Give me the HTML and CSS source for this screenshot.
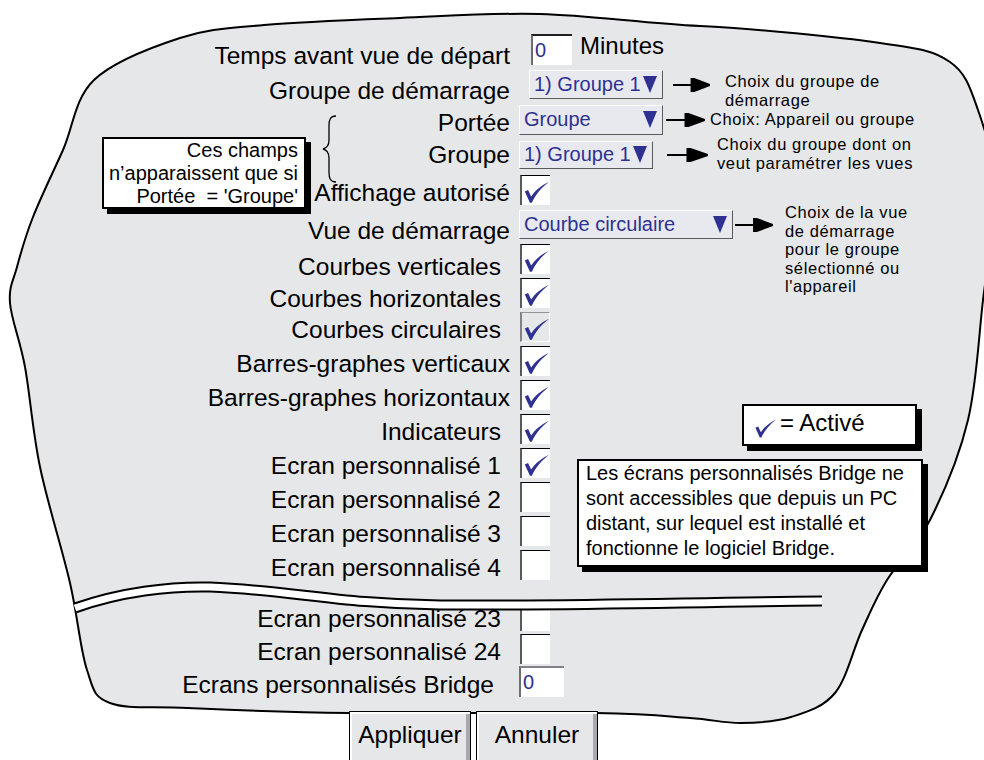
FILE: index.html
```html
<!DOCTYPE html>
<html lang="fr">
<head>
    <meta charset="UTF-8">
    <title>Vues de démarrage</title>
    <link rel="stylesheet" href="styles.css">
</head>
<body>
<div id="page">
    <svg class="blob" width="984" height="760" viewBox="0 0 984 760">
        <path d="M 94 80 C 113.5 61.3, 151.7 47.2, 180 38 C 208.3 28.8, 227.3 28.3, 264 25 C 300.7 21.7, 354 19.8, 400 18 C 446 16.2, 490 12.7, 540 14 C 590 15.3, 643.3 23.2, 700 26 C 756.7 28.8, 838.3 37, 880 43 C 921.7 49, 933.7 50.8, 950 62 C 966.3 73.2, 970.5 88.7, 978 110 C 985.5 131.3, 994.2 158.3, 995 190 C 995.8 221.7, 987.5 261.7, 983 300 C 978.5 338.3, 976.8 383.3, 968 420 C 959.2 456.7, 943.5 493.3, 930 520 C 916.5 546.7, 898.3 561.7, 887 580 C 875.7 598.3, 870.7 611.2, 862 630 C 853.3 648.8, 846.8 678.5, 835 693 C 823.2 707.5, 806.7 712, 791 717 C 775.3 722, 757.8 722.8, 741 723 C 724.2 723.2, 714.2 719.7, 690 718 C 665.8 716.3, 653 713.8, 596 713 C 539 712.2, 416 713.8, 348 713 C 280 712.2, 227.7 709.7, 188 708 C 148.3 706.3, 126.8 709.3, 110 703 C 93.2 696.7, 93.7 690, 87 670 C 80.3 650, 77.8 616.8, 70 583 C 62.2 549.2, 47.5 503, 40 467 C 32.5 431, 30 394.3, 25 367 C 20 339.7, 11.3 319.7, 10 303 C 8.7 286.3, 13.2 281.3, 17 267 C 20.8 252.7, 25.3 236.5, 33 217 C 40.7 197.5, 52.8 172.8, 63 150 C 73.2 127.2, 74.5 98.7, 94 80 Z"/>
    </svg>

    <div class="form">
        <div class="row tall">
            <span class="label low">Temps avant vue de départ</span>
            <span class="field time">0</span>
            <span class="unit">Minutes</span>
        </div>
        <div class="row tall">
            <span class="label low">Groupe de démarrage</span>
            <span class="select sel-start">1) Groupe 1<svg class="tri" viewBox="0 0 14 17"><polygon points="0,0 14,0 7,17"/></svg></span>
            <svg class="arrow a1" viewBox="0 0 40 14" preserveAspectRatio="none"><line x1="0" y1="7" x2="22" y2="7"/><polygon points="20,0 40,7 20,14"/></svg>
            <span class="note n1">Choix du groupe de<br>démarrage</span>
        </div>
        <div class="row tall">
            <span class="label">Portée</span>
            <span class="select sel-scope">Groupe<svg class="tri" viewBox="0 0 14 17"><polygon points="0,0 14,0 7,17"/></svg></span>
            <svg class="arrow a2" viewBox="0 0 40 14" preserveAspectRatio="none"><line x1="0" y1="7" x2="22" y2="7"/><polygon points="20,0 40,7 20,14"/></svg>
            <span class="note n2">Choix: Appareil ou groupe</span>
        </div>
        <div class="row tall">
            <span class="label high">Groupe</span>
            <span class="select sel-group">1) Groupe 1<svg class="tri" viewBox="0 0 14 17"><polygon points="0,0 14,0 7,17"/></svg></span>
            <svg class="arrow a3" viewBox="0 0 40 14" preserveAspectRatio="none"><line x1="0" y1="7" x2="22" y2="7"/><polygon points="20,0 40,7 20,14"/></svg>
            <span class="note n3">Choix du groupe dont on<br>veut paramétrer les vues</span>
        </div>
        <div class="row tall">
            <span class="label">Affichage autorisé</span>
            <span class="check"><svg viewBox="0 0 30 30"><path d="M3 16 L6.5 14.5 L9.8 21.5 C14.5 14.5 20.5 9.5 29 5.5 C21 11.5 15 18.5 10.5 28 L8.5 28 Z"/></svg></span>
        </div>
        <div class="row tall">
            <span class="label low">Vue de démarrage</span>
            <span class="select sel-view">Courbe circulaire<svg class="tri" viewBox="0 0 14 17"><polygon points="0,0 14,0 7,17"/></svg></span>
            <svg class="arrow a4" viewBox="0 0 40 14" preserveAspectRatio="none"><line x1="0" y1="7" x2="22" y2="7"/><polygon points="20,0 40,7 20,14"/></svg>
            <span class="note n4">Choix de la vue<br>de démarrage<br>pour le groupe<br>sélectionné ou<br>l'appareil</span>
        </div>
        <div class="row">
            <span class="label in lower">Courbes verticales</span>
            <span class="check"><svg viewBox="0 0 30 30"><path d="M3 16 L6.5 14.5 L9.8 21.5 C14.5 14.5 20.5 9.5 29 5.5 C21 11.5 15 18.5 10.5 28 L8.5 28 Z"/></svg></span>
        </div>
        <div class="row">
            <span class="label in low">Courbes horizontales</span>
            <span class="check"><svg viewBox="0 0 30 30"><path d="M3 16 L6.5 14.5 L9.8 21.5 C14.5 14.5 20.5 9.5 29 5.5 C21 11.5 15 18.5 10.5 28 L8.5 28 Z"/></svg></span>
        </div>
        <div class="row">
            <span class="label in">Courbes circulaires</span>
            <span class="check off"><svg viewBox="0 0 30 30"><path d="M3 16 L6.5 14.5 L9.8 21.5 C14.5 14.5 20.5 9.5 29 5.5 C21 11.5 15 18.5 10.5 28 L8.5 28 Z"/></svg></span>
        </div>
        <div class="row">
            <span class="label">Barres-graphes verticaux</span>
            <span class="check"><svg viewBox="0 0 30 30"><path d="M3 16 L6.5 14.5 L9.8 21.5 C14.5 14.5 20.5 9.5 29 5.5 C21 11.5 15 18.5 10.5 28 L8.5 28 Z"/></svg></span>
        </div>
        <div class="row">
            <span class="label">Barres-graphes horizontaux</span>
            <span class="check"><svg viewBox="0 0 30 30"><path d="M3 16 L6.5 14.5 L9.8 21.5 C14.5 14.5 20.5 9.5 29 5.5 C21 11.5 15 18.5 10.5 28 L8.5 28 Z"/></svg></span>
        </div>
        <div class="row">
            <span class="label in">Indicateurs</span>
            <span class="check"><svg viewBox="0 0 30 30"><path d="M3 16 L6.5 14.5 L9.8 21.5 C14.5 14.5 20.5 9.5 29 5.5 C21 11.5 15 18.5 10.5 28 L8.5 28 Z"/></svg></span>
        </div>
        <div class="row">
            <span class="label in">Ecran personnalisé 1</span>
            <span class="check"><svg viewBox="0 0 30 30"><path d="M3 16 L6.5 14.5 L9.8 21.5 C14.5 14.5 20.5 9.5 29 5.5 C21 11.5 15 18.5 10.5 28 L8.5 28 Z"/></svg></span>
        </div>
        <div class="row">
            <span class="label in">Ecran personnalisé 2</span>
            <span class="check"></span>
        </div>
        <div class="row">
            <span class="label in">Ecran personnalisé 3</span>
            <span class="check"></span>
        </div>
        <div class="row">
            <span class="label in">Ecran personnalisé 4</span>
            <span class="check"></span>
        </div>
        <div class="gap"></div>
        <div class="row short">
            <span class="label in">Ecran personnalisé 23</span>
            <span class="check"></span>
        </div>
        <div class="row short">
            <span class="label in">Ecran personnalisé 24</span>
            <span class="check"></span>
        </div>
        <div class="row short">
            <span class="label in2">Ecrans personnalisés Bridge</span>
            <span class="field bridge">0</span>
        </div>

        <div class="buttons">
            <button class="btn">Appliquer</button>
            <button class="btn">Annuler</button>
        </div>
    </div>

    <svg class="brace" width="20" height="70" viewBox="0 0 20 70">
        <path d="M16 2 C10 2 9 6 9 12 L9 26 C9 31 7 34 3 35 C7 36 9 39 9 44 L9 58 C9 64 10 68 16 68"/>
    </svg>

    <div class="callout scope">Ces champs<br>n’apparaissent que si<br>Portée &nbsp;= 'Groupe'</div>

    <div class="callout active">
        <svg width="24" height="24" viewBox="0 0 30 30"><path d="M3 16 L6.5 14.5 L9.8 21.5 C14.5 14.5 20.5 9.5 29 5.5 C21 11.5 15 18.5 10.5 28 L8.5 28 Z"/></svg>
        <span>= Activé</span>
    </div>

    <div class="callout bridge-note">Les écrans personnalisés Bridge ne<br>sont accessibles que depuis un PC<br>distant, sur lequel est installé et<br>fonctionne le logiciel Bridge.</div>

    <svg class="cut" width="984" height="50" viewBox="0 0 984 50">
        <path class="cut-edge" d="M 75 38 C 120 22, 170 16, 210 17 C 290 20, 340 34, 440 35 C 560 36, 700 32, 822 31"/>
        <path class="cut-gap" d="M 75 38 C 120 22, 170 16, 210 17 C 290 20, 340 34, 440 35 C 560 36, 700 32, 822 31"/>
    </svg>
</div>
</body>
</html>
```

FILE: styles.css
```css
* {
    margin: 0;
    padding: 0;
    box-sizing: border-box;
}

body {
    background: #fff;
    color: #000;
    font-family: "Liberation Sans", Arial, sans-serif;
}

#page {
    position: relative;
    width: 984px;
    height: 760px;
    overflow: hidden;
}

.blob {
    position: absolute;
    left: 0;
    top: 0;
}

.blob path {
    fill: #e6e7e9;
    stroke: #000;
    stroke-width: 2;
}

/* form rows */
.form {
    position: relative;
    padding-top: 32px;
}

.row {
    display: flex;
    align-items: center;
    height: 34px;
}

.row.tall {
    height: 35px;
}

.row.short {
    height: 33px;
}

.gap {
    height: 17px;
}

.label {
    flex: none;
    width: 510px;
    padding-top: 6px;
    font-size: 24.5px;
    line-height: 24px;
    text-align: right;
    white-space: nowrap;
}

.label.low {
    padding-top: 12px;
}

.label.lower {
    padding-top: 16px;
}

.label.high {
    padding-top: 0;
}

.label.in {
    padding-right: 9px;
}

.label.in2 {
    padding-right: 16px;
}

.field {
    flex: none;
    height: 31px;
    background: #fff;
    border-top: 2px solid #231f20;
    border-left: 2px solid #6d6e71;
    padding-left: 2px;
    color: #2e3192;
    font-size: 20px;
    line-height: 29px;
}

.field.time {
    width: 41px;
    margin-left: 21px;
}

.field.bridge {
    width: 45px;
    margin-left: 9px;
    border-top-color: #808285;
}

.unit {
    margin-left: 8px;
    margin-bottom: 8px;
    font-size: 24px;
}

.select {
    flex: none;
    display: flex;
    align-items: center;
    justify-content: space-between;
    height: 29px;
    margin-left: 9px;
    padding: 0 5px 0 4px;
    background: #e8e9ee;
    border: 1px solid;
    border-color: #fff #58595b #58595b #fff;
    color: #2e3192;
    font-size: 20px;
    white-space: nowrap;
}

.sel-start {
    width: 134px;
    margin-left: 19px;
}

.sel-scope {
    width: 144px;
    height: 30px;
}

.sel-group {
    width: 134px;
    height: 28px;
}

.sel-view {
    width: 214px;
}

.tri {
    width: 14px;
    height: 17px;
    fill: #2e3192;
}

.check {
    flex: none;
    width: 30px;
    height: 30px;
    margin-left: 10px;
    background: #fff;
    border-top: 1px solid #000;
    border-left: 2px solid #58595b;
}

.check svg {
    display: block;
    width: 28px;
    height: 29px;
    fill: #2e3192;
}

.check.off {
    background: #e6e7e9;
    border-top-color: #939598;
    border-left-color: #808285;
    border-right: 1px solid #fff;
    border-bottom: 1px solid #fff;
}

/* arrows and notes beside the fields */
.arrow {
    flex: none;
    height: 14px;
    fill: #000;
    stroke: #000;
    stroke-width: 2;
}

.a1 { width: 37px; margin-left: 10px; }
.a2 { width: 39px; margin-left: 3px; }
.a3 { width: 41px; margin-left: 14px; }
.a4 { width: 38px; margin-left: 2px; }

.note {
    font-size: 16.5px;
    line-height: 18.5px;
    letter-spacing: 0.6px;
    white-space: nowrap;
}

.n1 { align-self: flex-start; margin: 5px 0 0 15px; }
.n2 { margin-left: 5px; }
.n3 { align-self: flex-start; margin: -2px 0 0 9px; }
.n4 { align-self: flex-start; margin: -4px 0 0 12px; }

/* buttons */
.buttons {
    display: flex;
    gap: 5px;
    margin-top: 13px;
    padding-left: 349px;
}

.btn {
    width: 122px;
    height: 60px;
    padding-bottom: 12px;
    background: #e6e7e9;
    border: 1px solid #000;
    box-shadow: inset 2px 2px 0 #fff, inset -4px 0 0 #a7a9ac;
    color: #000;
    font-family: inherit;
    font-size: 24.5px;
}

/* annotations over the drawing */
.brace {
    position: absolute;
    left: 320px;
    top: 114px;
    fill: none;
    stroke: #000;
    stroke-width: 1.3;
}

.callout {
    position: absolute;
    background: #fff;
    border: 2px solid #000;
    box-shadow: 5px 5px 0 #000;
}

.scope {
    left: 102px;
    top: 137px;
    width: 204px;
    height: 72px;
    padding-right: 6px;
    font-size: 20px;
    line-height: 23px;
    text-align: right;
}

.active {
    left: 742px;
    top: 404px;
    width: 175px;
    height: 42px;
    display: flex;
    align-items: center;
    gap: 3px;
    padding: 0 0 4px 9px;
    font-size: 24px;
}

.active svg {
    fill: #2e3192;
    margin-top: 8px;
}

.bridge-note {
    left: 577px;
    top: 459px;
    width: 346px;
    height: 108px;
    padding-left: 7px;
    font-size: 20px;
    line-height: 25px;
}

.cut {
    position: absolute;
    left: 0;
    top: 570px;
    fill: none;
}

.cut-edge {
    stroke: #000;
    stroke-width: 11;
}

.cut-gap {
    stroke: #fff;
    stroke-width: 7;
}
```
